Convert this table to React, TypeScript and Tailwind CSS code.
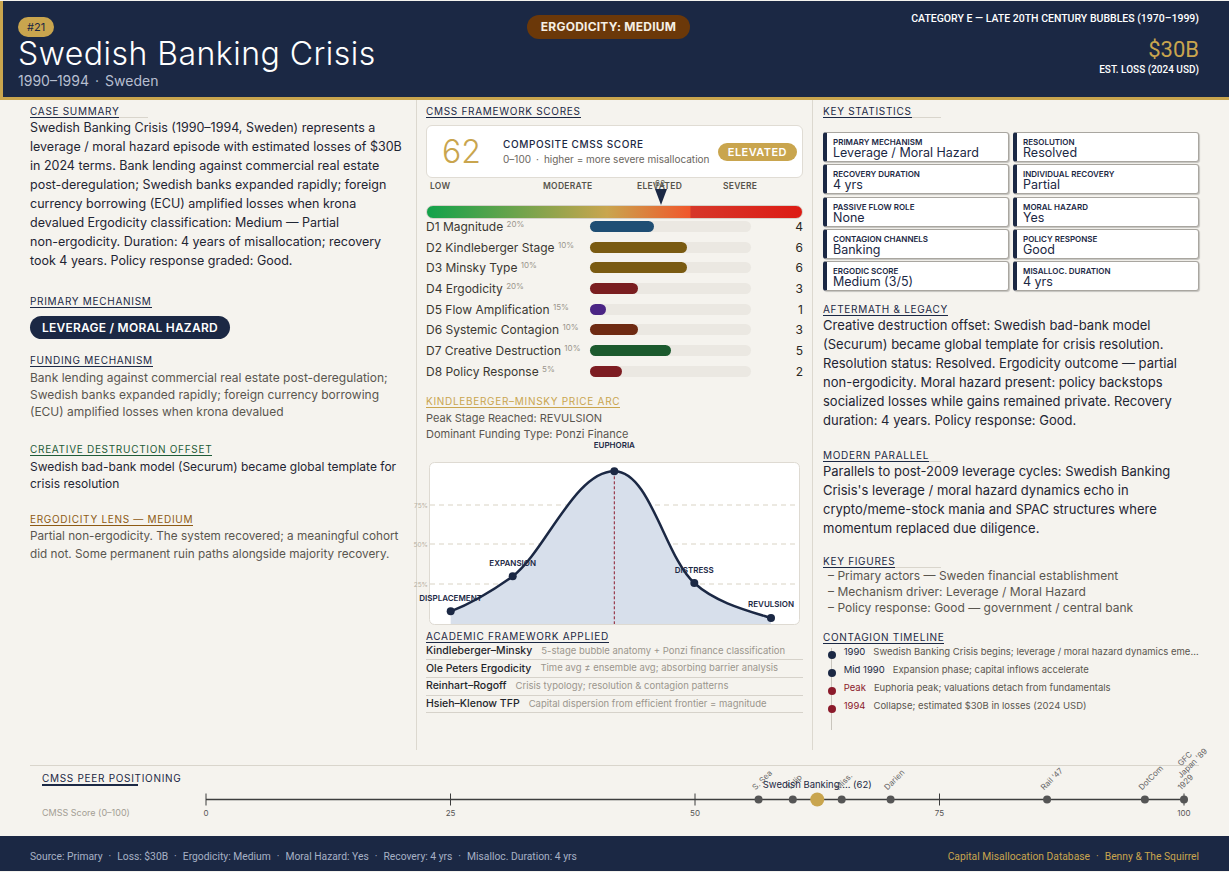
import React from 'react';

type Tone = 'navy' | 'green' | 'brown' | 'gold';

const toneClass: Record<Tone, string> = {
  navy: 'text-[#1b2844] border-[#1b2844]',
  green: 'text-[#1e5b38] border-[#1e5b38]',
  brown: 'text-[#8d5a14] border-[#8d5a14]',
  gold: 'text-[#c9a54e] border-[#c9a54e]',
};

function SectionLabel({ children, tone = 'navy' }: { children: React.ReactNode; tone?: Tone }) {
  return (
    <div className="flex">
      <div className="flex min-w-[118px] items-end border-b border-[#d9d5cc]">
        <span className={`-mb-px border-b-[1.5px] text-[10px] uppercase leading-[12px] tracking-[0.07em] ${toneClass[tone]}`}>
          {children}
        </span>
      </div>
    </div>
  );
}

const dims = [
  { name: 'D1 Magnitude', w: '20%', v: 4, c: 'bg-[#1f4e74]' },
  { name: 'D2 Kindleberger Stage', w: '10%', v: 6, c: 'bg-[#7a5b12]' },
  { name: 'D3 Minsky Type', w: '10%', v: 6, c: 'bg-[#7a5b12]' },
  { name: 'D4 Ergodicity', w: '20%', v: 3, c: 'bg-[#7a1e20]' },
  { name: 'D5 Flow Amplification', w: '15%', v: 1, c: 'bg-[#4b2585]' },
  { name: 'D6 Systemic Contagion', w: '10%', v: 3, c: 'bg-[#6e2a12]' },
  { name: 'D7 Creative Destruction', w: '10%', v: 5, c: 'bg-[#1c5a2e]' },
  { name: 'D8 Policy Response', w: '5%', v: 2, c: 'bg-[#7d1d22]' },
];

const stats = [
  ['Primary Mechanism', 'Leverage / Moral Hazard'],
  ['Resolution', 'Resolved'],
  ['Recovery Duration', '4 yrs'],
  ['Individual Recovery', 'Partial'],
  ['Passive Flow Role', 'None'],
  ['Moral Hazard', 'Yes'],
  ['Contagion Channels', 'Banking'],
  ['Policy Response', 'Good'],
  ['Ergodic Score', 'Medium (3/5)'],
  ['Misalloc. Duration', '4 yrs'],
];

const frameworks = [
  ['Kindleberger–Minsky', '5-stage bubble anatomy + Ponzi finance classification'],
  ['Ole Peters Ergodicity', 'Time avg ≠ ensemble avg; absorbing barrier analysis'],
  ['Reinhart–Rogoff', 'Crisis typology; resolution & contagion patterns'],
  ['Hsieh–Klenow TFP', 'Capital dispersion from efficient frontier = magnitude'],
];

const timeline = [
  { y: '1990', t: 'Swedish Banking Crisis begins; leverage / moral hazard dynamics emerge', red: false },
  { y: 'Mid 1990', t: 'Expansion phase; capital inflows accelerate', red: false },
  { y: 'Peak', t: 'Euphoria peak; valuations detach from fundamentals', red: true },
  { y: '1994', t: 'Collapse; estimated $30B in losses (2024 USD)', red: true },
];

const peers = [
  { s: 56.5, labels: ['S. Sea'] },
  { s: 60, labels: ['Tulip'] },
  { s: 65, labels: ['Miss.'] },
  { s: 70, labels: ['Darien'] },
  { s: 86, labels: ["Rail '47"] },
  { s: 96, labels: ['DotCom'] },
  { s: 100, labels: ['1929', "Japan '89", 'GFC'] },
];

const footerItems = ['Source: Primary', 'Loss: $30B', 'Ergodicity: Medium', 'Moral Hazard: Yes', 'Recovery: 4 yrs', 'Misalloc. Duration: 4 yrs'];

// price arc points, in chart svg coordinates
const arc = [
  { x: 35.7, y: 174.3, label: 'DISPLACEMENT', ly: 164 },
  { x: 97.7, y: 139.3, label: 'EXPANSION', ly: 129 },
  { x: 199.3, y: 34.3, label: 'EUPHORIA', ly: 11 },
  { x: 279.3, y: 146, label: 'DISTRESS', ly: 136 },
  { x: 356, y: 181, label: 'REVULSION', ly: 170 },
];
const arcPath = 'M35.7,174.3 C60,165 80,152 97.7,139.3 C130,115 160,34 199.3,34.3 C235,34 250,120 279.3,146 C300,165 330,173 356,181';

function PriceArc() {
  return (
    <svg width="388" height="190" className="-ml-[11px] -mt-[5px] block overflow-visible">
      <rect x="14.5" y="25.5" width="370" height="162" rx="5" fill="#ffffff" stroke="#dedad2" />
      {[
        [68, '75%'],
        [107, '50%'],
        [147, '25%'],
      ].map(([y, t]) => (
        <g key={t as string}>
          <line x1="15" x2="384" y1={y as number} y2={y as number} stroke="#d9d3c4" strokeDasharray="5 4" />
          <text x="13" y={(y as number) + 2.5} fontSize="6.5" fill="#b8b1a3" textAnchor="end">{t}</text>
        </g>
      ))}
      <path d={`${arcPath} L356,187 L35.7,187 Z`} fill="#d7dfeb" />
      <line x1="199.3" x2="199.3" y1="34.3" y2="187" stroke="#8b1a2b" strokeWidth="1" strokeDasharray="3 2" />
      <path d={arcPath} fill="none" stroke="#1b2844" strokeWidth="2.5" />
      {arc.map((p) => (
        <g key={p.label}>
          <circle cx={p.x} cy={p.y} r="4" fill="#1b2844" />
          <text x={p.x} y={p.ly} fontSize="8" fontWeight="600" fill="#1b2844" textAnchor="middle">{p.label}</text>
        </g>
      ))}
    </svg>
  );
}

function PeerAxis() {
  const x = (s: number) => 176 + s * 9.78;
  const ay = 13.5;
  return (
    <svg width="1169" height="50" className="block overflow-visible">
      <text x="12" y="30" fontSize="9" fill="#a39e94">CMSS Score (0–100)</text>
      <line x1={x(0)} x2={x(100)} y1={ay} y2={ay} stroke="#3d3d3d" strokeWidth="1.5" />
      {[0, 25, 50, 75, 100].map((t) => (
        <g key={t}>
          <line x1={x(t)} x2={x(t)} y1={ay - 6} y2={ay + 6} stroke="#3d3d3d" strokeWidth="1" />
          <text x={x(t)} y={ay + 16} fontSize="8" fill="#555" textAnchor="middle">{t}</text>
        </g>
      ))}
      {peers.map((p) => (
        <g key={p.labels[0]}>
          <circle cx={x(p.s)} cy={ay} r="4" fill="#555555" />
          {p.labels.map((l, i) => (
            <text
              key={l}
              x={x(p.s) - 3}
              y={ay - 9 - i * 12}
              fontSize="8"
              fill="#666"
              transform={`rotate(-45 ${x(p.s) - 3} ${ay - 9 - i * 12})`}
            >
              {l}
            </text>
          ))}
        </g>
      ))}
      <circle cx={x(62.5)} cy={ay} r="7" fill="#c9a54e" />
      <text x={x(62.5)} y={ay - 12} fontSize="9.5" fill="#1b2844" textAnchor="middle">Swedish Banking ... (62)</text>
    </svg>
  );
}

export default function App() {
  return (
    <div className="flex min-h-screen w-[1229px] flex-col bg-[#f5f3ee] pt-px [font-family:Inter,'Noto_Sans',sans-serif]">
      <header className="grid h-[99px] grid-cols-[1fr_auto_1fr] border-b-[3px] border-l-[3px] border-[#c9a54e] bg-[#1b2844] pl-[15px] pr-[30px]">
        <div className="pt-[16px]">
          <span className="block w-fit rounded-full bg-[#c9a54e] px-[9px] text-[11px] leading-[20px] text-[#1b2844]">#21</span>
          <h1 className="text-[32px] font-light leading-[34px] tracking-[0.015em] text-white">Swedish Banking Crisis</h1>
          <div className="mt-px text-[14px] leading-[18px] text-[#b7bfd0]">
            1990–1994<span className="mx-[6px]">·</span>Sweden
          </div>
        </div>
        <div className="pt-[14px]">
          <span className="block w-fit rounded-full bg-[#6b3809] px-[14px] text-[12px] font-bold leading-[24px] tracking-[0.02em] text-[#f5efe4]">
            ERGODICITY: MEDIUM
          </span>
        </div>
        <div className="pt-[11px] text-right [font-family:Roboto,sans-serif]">
          <div className="text-[10.5px] font-medium leading-[14px] text-white">CATEGORY E — LATE 20TH CENTURY BUBBLES (1970–1999)</div>
          <div className="mt-[11px] text-[22px] leading-[26px] text-[#c9a54e]">$30B</div>
          <div className="mt-px text-[10px] font-medium leading-[12px] text-white">EST. LOSS (2024 USD)</div>
        </div>
      </header>

      <main className="grid h-[650px] grid-cols-[416px_396px_minmax(0,1fr)]">
        {/* left column */}
        <section className="pl-[30px] pr-[10px] pt-[5px]">
          <SectionLabel>Case Summary</SectionLabel>
          <p className="text-[12.5px] leading-[19px] text-[#1f2533]">
            Swedish Banking Crisis (1990–1994, Sweden) represents a leverage / moral hazard episode with estimated losses of $30B in 2024 terms. Bank lending against commercial real estate post-deregulation; Swedish banks expanded rapidly; foreign currency borrowing (ECU) amplified losses when krona devalued Ergodicity classification: Medium — Partial{' '}
            <span className="whitespace-nowrap">non-ergodicity.</span> Duration: 4 years of misallocation; recovery took 4 years. Policy response graded: Good.
          </p>
          <div className="mt-[25px]">
            <SectionLabel>Primary Mechanism</SectionLabel>
          </div>
          <div className="mt-[8px] inline-block rounded-full bg-[#1b2844] px-[12px] text-[12px] font-semibold leading-[23px] tracking-[0.02em] text-white">
            LEVERAGE / MORAL HAZARD
          </div>
          <div className="mt-[15px]">
            <SectionLabel>Funding Mechanism</SectionLabel>
          </div>
          <p className="mt-[2px] text-[12px] leading-[17px] text-[#5a564f]">
            Bank lending against commercial real estate post-deregulation; Swedish banks expanded rapidly; foreign currency borrowing (ECU) amplified losses when krona devalued
          </p>
          <div className="mt-[23px]">
            <SectionLabel tone="green">Creative Destruction Offset</SectionLabel>
          </div>
          <p className="mt-[2px] text-[12px] leading-[17px] text-[#1f2533]">
            Swedish bad-bank model (Securum) became global template for crisis resolution
          </p>
          <div className="mt-[21px]">
            <SectionLabel tone="brown">Ergodicity Lens — Medium</SectionLabel>
          </div>
          <p className="mt-[2px] text-[11.75px] leading-[17.5px] text-[#5a564f]">
            Partial non-ergodicity. The system recovered; a meaningful cohort did not. Some permanent ruin paths alongside majority recovery.
          </p>
        </section>

        {/* middle column */}
        <section className="border-l border-[#dcd8cf] px-[9px] pt-[5px]">
          <SectionLabel>CMSS Framework Scores</SectionLabel>
          <div className="mt-[7px] flex h-[53px] items-center rounded-md border border-[#e0dcd4] bg-white pl-[15px] pr-[5px]">
            <div className="w-[61px] text-[32px] font-light leading-none text-[#c9a54e]">62</div>
            <div className="flex-1">
              <div className="text-[10px] font-medium leading-[14px] tracking-[0.06em] text-[#1b2844]">COMPOSITE CMSS SCORE</div>
              <div className="mt-[2px] text-[10px] leading-[13px] text-[#6b665e]">
                0–100<span className="mx-[5px]">·</span>higher = more severe misallocation
              </div>
            </div>
            <span className="rounded-full bg-[#c9a54e] px-[10px] text-[11px] font-semibold leading-[18px] tracking-[0.04em] text-white">ELEVATED</span>
          </div>
          <div className="relative h-[27px] text-[8.5px] font-semibold leading-[10px] tracking-[0.03em] text-[#57534c]">
            <span className="absolute left-[4px] top-[3px]">LOW</span>
            <span className="absolute left-[117px] top-[3px]">MODERATE</span>
            <span className="absolute left-[211px] top-[3px]">ELEVATED</span>
            <span className="absolute left-[297px] top-[3px]">SEVERE</span>
            <span className="absolute left-[229px] top-0 text-[8px] font-normal text-[#57534c]">62</span>
            <svg className="absolute left-[229px] top-[11px]" width="12" height="16" viewBox="0 0 12 16">
              <polygon points="0,0 12,0 6,16" fill="#1b2844" />
            </svg>
          </div>
          <div className="h-[14px] rounded-full border border-[#d7d3cb] bg-[linear-gradient(90deg,#12a24a_0%,#c9a54e_48%,#f0582c_70%,#d6382a_70.5%,#dd1b14_100%)]" />
          <div className="flex flex-col gap-[8px] pt-px">
            {dims.map((d) => (
              <div key={d.name} className="flex h-[12.7px] items-center">
                <div className="w-[164px] flex-none whitespace-nowrap text-[12px] leading-[13px] text-[#3b3832]">
                  {d.name} <sup className="text-[8px] text-[#9a958c]">{d.w}</sup>
                </div>
                <div className="h-[11px] w-[161px] rounded-full bg-[#ebe8e2]">
                  <div className={`h-full rounded-full ${d.c}`} style={{ width: `${d.v * 10}%` }} />
                </div>
                <div className="flex-1 text-right text-[12px] leading-[13px] text-[#2a2824]">{d.v}</div>
              </div>
            ))}
          </div>
          <div className="mt-[17px]">
            <SectionLabel tone="gold">Kindleberger–Minsky Price Arc</SectionLabel>
          </div>
          <div className="mt-[2px] text-[11px] leading-[16px] text-[#5a564f]">
            <div>Peak Stage Reached: REVULSION</div>
            <div>Dominant Funding Type: Ponzi Finance</div>
          </div>
          <PriceArc />
          <div className="mt-[3px]">
            <SectionLabel>Academic Framework Applied</SectionLabel>
          </div>
          <div>
            {frameworks.map(([n, d]) => (
              <div key={n} className="flex h-[17.7px] items-center gap-[9px] whitespace-nowrap border-b border-[#d6d2ca]">
                <span className="text-[10.5px] font-medium text-[#23252b]">{n}</span>
                <span className="text-[9.5px] text-[#9b968d]">{d}</span>
              </div>
            ))}
          </div>
        </section>

        {/* right column */}
        <section className="border-l border-[#dcd8cf] pl-[10px] pr-[30px] pt-[5px]">
          <SectionLabel>Key Statistics</SectionLabel>
          <div className="mt-[14px] grid grid-cols-2 gap-x-[4px] gap-y-[2.3px]">
            {stats.map(([l, v]) => (
              <div
                key={l}
                className="h-[30px] rounded-[3px] border border-l-[4px] border-[#a9a6a0] border-l-[#1b2844] bg-white pl-[6px] pt-[5px] shadow-[1px_1px_1px_rgba(0,0,0,0.2)]"
              >
                <div className="text-[8px] font-semibold uppercase leading-[9px] text-[#1b2844]">{l}</div>
                <div className="text-[12.5px] leading-[12px] text-[#1b2844]">{v}</div>
              </div>
            ))}
          </div>
          <div className="mt-[12px]">
            <SectionLabel>Aftermath &amp; Legacy</SectionLabel>
          </div>
          <p className="text-[13px] leading-[19px] text-[#1f2533]">
            Creative destruction offset: Swedish bad-bank model (Securum) became global template for crisis resolution. Resolution status: Resolved. Ergodicity outcome — partial non-ergodicity. Moral hazard present: policy backstops socialized losses while gains remained private. Recovery duration: 4 years. Policy response: Good.
          </p>
          <div className="mt-[19px]">
            <SectionLabel>Modern Parallel</SectionLabel>
          </div>
          <p className="text-[13px] leading-[19px] text-[#1f2533]">
            Parallels to post-2009 leverage cycles: Swedish Banking Crisis's leverage / moral hazard dynamics echo in crypto/meme-stock mania and SPAC structures where momentum replaced due diligence.
          </p>
          <div className="mt-[17px]">
            <SectionLabel>Key Figures</SectionLabel>
          </div>
          <ul className="text-[12px] leading-[16px] text-[#5a564f]">
            <li className="pl-[5px]">– Primary actors — Sweden financial establishment</li>
            <li className="pl-[5px]">– Mechanism driver: Leverage / Moral Hazard</li>
            <li className="pl-[5px]">– Policy response: Good — government / central bank</li>
          </ul>
          <div className="mt-[15px]">
            <SectionLabel>Contagion Timeline</SectionLabel>
          </div>
          <div className="relative mt-px">
            <div className="absolute bottom-[-14px] left-[8px] top-[3px] w-px bg-[#c9c5bd]" />
            {timeline.map((e) => (
              <div key={e.y} className="relative flex h-[17.8px] items-start text-[9.5px] leading-[13px]">
                <span className={`ml-[4.7px] mt-[6px] h-[8px] w-[8px] flex-none rounded-full ${e.red ? 'bg-[#8b1a2b]' : 'bg-[#1b2844]'}`} />
                <span className={`ml-[8px] flex-none ${e.red ? 'text-[#8b1a2b]' : 'text-[#1b2844]'}`}>{e.y}</span>
                <span className="ml-[8px] min-w-0 truncate text-[#5a564f]">{e.t}</span>
              </div>
            ))}
          </div>
        </section>
      </main>

      <div className="mx-[30px] mt-[15px] h-[71px] border-t border-[#d9d5cc]">
        <div className="pl-[12px] pt-[6px]">
          <div className="text-[10px] uppercase leading-[12px] tracking-[0.07em] text-[#1b2844]">CMSS Peer Positioning</div>
          <div className="h-[1.5px] w-[96px] bg-[#1b2844]" />
        </div>
        <PeerAxis />
      </div>

      <footer className="flex h-[35px] items-center justify-between bg-[#1b2844] px-[30px] pt-[6px] text-[10.3px] [font-family:Roboto,sans-serif]">
        <span className="text-[#a7b1c4]">
          {footerItems.map((t, i) => (
            <React.Fragment key={t}>
              {i > 0 && <span className="mx-[6px]">·</span>}
              {t}
            </React.Fragment>
          ))}
        </span>
        <span className="text-[#c9a54e]">
          Capital Misallocation Database<span className="mx-[6px]">·</span>Benny &amp; The Squirrel
        </span>
      </footer>
    </div>
  );
}
